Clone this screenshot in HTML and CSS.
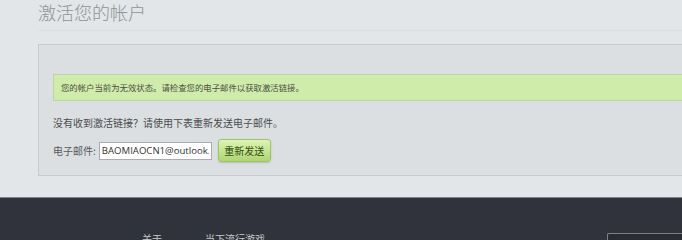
FILE: index.html
```html
<!DOCTYPE html>
<html lang="zh-CN">
<head>
  <meta charset="UTF-8">
  <meta name="viewport" content="width=device-width, initial-scale=1.0">
  <title>激活您的帐户</title>
  <link rel="stylesheet" href="styles.css">
</head>
<body>
  <div class="page">
    <div class="header">
      <h1 class="title">激活您的帐户</h1>
    </div>

    <div class="panel">
      <div class="notice">您的帐户当前为无效状态。请检查您的电子邮件以获取激活链接。</div>
      <p class="hint">没有收到激活链接？请使用下表重新发送电子邮件。</p>
      <form class="resend" onsubmit="return false;">
        <label class="label" for="email">电子邮件:</label>
        <input class="field" id="email" type="text" value="BAOMIAOCN1@outlook.com">
        <button class="btn" type="submit">重新发送</button>
      </form>
    </div>
  </div>

  <div class="footer">
    <div class="footer-links">
      <a href="#" class="link">关于</a>
      <a href="#" class="link">当下流行游戏</a>
    </div>
    <div class="footer-box"></div>
  </div>
</body>
</html>
```

FILE: styles.css
```css
* { box-sizing: border-box; font-family: 'Noto Sans CJK SC', 'Noto Sans', sans-serif; }
html, body { overflow: hidden; }
body { margin: 0; background: #e2e6e9; }
.page { padding-left: 38px; margin-right: -40px; }
.header { height: 31px; border-bottom: 1px solid #dcdfe2; margin-bottom: 13px; }
.title { margin: 0; font-size: 18px; line-height: 24px; font-weight: 300; color: #909294; }
.panel { background: #dbdfe2; border: 1px solid #c6cbcf; padding: 29px 0 13px 14px; }
.notice { background: #d0ecaa; border: 1px solid #bcd69c; height: 27px; padding-left: 7px; font-size: 8.4px; line-height: 25px; color: #4b5046; }
.hint { margin: 15px 0 9px; font-size: 10px; line-height: 14px; color: #4a4c4e; }
.resend { display: flex; align-items: center; }
.label { font-size: 10px; color: #55585b; margin-right: 3px; }
.field { width: 113px; height: 18px; border: 1px solid #a9adb1; background: #fff; padding: 0 2px; font-family: 'Open Sans', sans-serif; font-size: 9.6px; color: #333; outline: none; }
.btn { margin-left: 6px; height: 23px; width: 53px; padding: 0; border: 1px solid #9fc467; border-radius: 3px; background: linear-gradient(#dff3b4, #aed673); box-shadow: 0 1px 2px rgba(0,0,0,0.15); font-size: 10px; color: #34500f; cursor: pointer; }
.footer { margin-top: 21px; height: 60px; background: #30333b; border-top: 1px solid #7f8489; display: flex; align-items: flex-start; padding-top: 34px; }
.footer-links { display: flex; gap: 43px; padding-left: 142px; flex: 1; }
.link { font-size: 10px; line-height: 14px; color: #c9cbcd; text-decoration: none; }
.footer-box { margin-top: 1px; width: 75px; height: 30px; background: #2a2c33; border: 1px solid #7b7f88; border-right: none; border-radius: 2px 0 0 0; }
```
